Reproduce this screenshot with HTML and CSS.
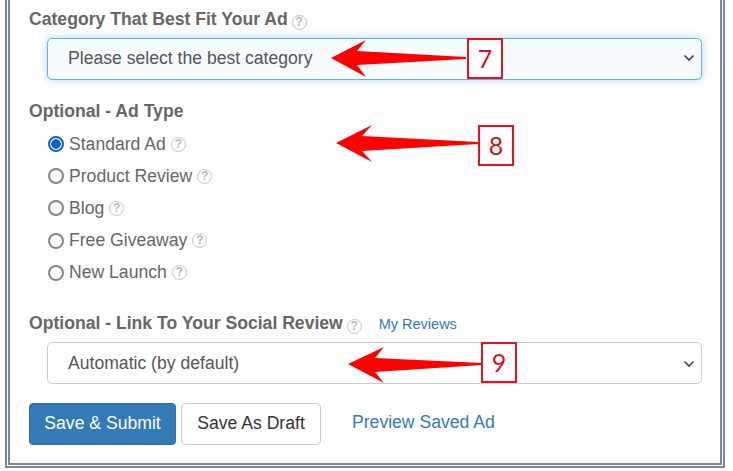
FILE: index.html
```html
<!DOCTYPE html>
<html lang="en">
<head>
  <meta charset="UTF-8" />
  <title>Submit Ad</title>
  <link rel="stylesheet" href="styles.css">
</head>
<body>

<div class="frame">
  <form class="ad-form">
    <div class="group group-category">
      <div class="group-label">Category That Best Fit Your Ad <span class="help">?</span></div>
      <div class="select select-focus">
        <span>Please select the best category</span>
        <svg class="chevron" viewBox="0 0 12 8"><path d="M1.5 1.5 6 6l4.5-4.5" /></svg>
      </div>
    </div>

    <div class="group group-type">
      <div class="group-label">Optional - Ad Type</div>
      <div class="radios">
        <label class="radio"><span class="dot dot-on"></span>Standard Ad <span class="help">?</span></label>
        <label class="radio"><span class="dot"></span>Product Review <span class="help">?</span></label>
        <label class="radio"><span class="dot"></span>Blog <span class="help">?</span></label>
        <label class="radio"><span class="dot"></span>Free Giveaway <span class="help">?</span></label>
        <label class="radio"><span class="dot"></span>New Launch <span class="help">?</span></label>
      </div>
    </div>

    <div class="group group-review">
      <div class="group-label">Optional - Link To Your Social Review <span class="help">?</span><a class="my-reviews" href="#">My Reviews</a></div>
      <div class="select">
        <span>Automatic (by default)</span>
        <svg class="chevron" viewBox="0 0 12 8"><path d="M1.5 1.5 6 6l4.5-4.5" /></svg>
      </div>
    </div>

    <div class="actions">
      <button type="button" class="btn btn-primary">Save &amp; Submit</button>
      <button type="button" class="btn btn-default">Save As Draft</button>
      <a class="preview-link" href="#">Preview Saved Ad</a>
    </div>
  </form>
</div>

<!-- red callouts drawn over the form -->
<svg class="arrow arrow-7" viewBox="0 0 136 40"><path d="M0 19 35 1 26 12 135 18V20L26 26 35 38Z" /></svg>
<div class="callout callout-7">7</div>
<svg class="arrow arrow-8" viewBox="0 0 143 40"><path d="M0 18 36 0 26 11 142 17V19L26 26 36 37Z" /></svg>
<div class="callout callout-8">8</div>
<svg class="arrow arrow-9" viewBox="0 0 135 40"><path d="M0 17 36 0 27 11 134 16V18L27 25 36 36Z" /></svg>
<div class="callout callout-9">9</div>

</body>
</html>
```

FILE: styles.css
```css
body {
  font-family: 'Liberation Sans', Arial, sans-serif;
  margin: 0;
  height: 471px;
  overflow: hidden;
  background: #fff;
  color: #555;
}
.frame {
  margin: 0 8px 0 5px;
  height: 468px;
  box-sizing: border-box;
  border: 5px double #7a86a5;
  border-top: none;
  padding: 0 18px 0 19px;
}
.group-label {
  font-size: 17.6px;
  font-weight: bold;
  color: #666;
  line-height: 22px;
}
.group-category {
  padding-top: 8px;
}
.group-type {
  padding-top: 20px;
}
.group-review {
  padding-top: 23px;
}
.group-review .select {
  margin-top: 7px;
  padding-top: 2px;
}
.help {
  display: inline-block;
  box-sizing: border-box;
  width: 15px;
  height: 15px;
  margin-left: -1px;
  border: 1.5px solid #c4c4c4;
  border-radius: 50%;
  color: #b8b8b8;
  font-size: 12px;
  font-weight: bold;
  line-height: 12px;
  text-align: center;
  vertical-align: -1px;
}
.select {
  display: flex;
  justify-content: space-between;
  align-items: center;
  box-sizing: border-box;
  height: 42px;
  margin: 8px 0 0 18px;
  padding: 0 6px 0 20px;
  border: 1px solid #ccc;
  border-radius: 5px;
  font-size: 17.6px;
  color: #555;
  background: #fff;
}
.select-focus {
  padding-bottom: 2px;
  border-color: #66afe9;
  background: #f6fbff;
  box-shadow: 0 0 8px rgba(102, 175, 233, 0.5);
}
.chevron {
  width: 12px;
  height: 8px;
  fill: none;
  stroke: #444;
  stroke-width: 1.6;
}
.radios {
  margin: 6px 0 0 19px;
}
.radio {
  display: flex;
  align-items: center;
  height: 32.2px;
  font-size: 17.6px;
  color: #666;
}
.radio .help {
  margin-left: 5px;
}
.dot {
  box-sizing: border-box;
  width: 16px;
  height: 16px;
  margin-right: 5px;
  border: 2px solid #85858c;
  border-radius: 50%;
  background: #fff;
}
.dot-on {
  border-color: #0b63ce;
  background: radial-gradient(circle, #0b63ce 0 4.5px, #fff 5px);
}
.my-reviews {
  margin-left: 17px;
  font-size: 14.5px;
  font-weight: normal;
  color: #337ab7;
  text-decoration: none;
}
.actions {
  display: flex;
  align-items: center;
  margin-top: 19px;
}
.btn {
  box-sizing: border-box;
  height: 42px;
  padding: 0;
  border-radius: 4px;
  font-family: inherit;
  font-size: 17.6px;
}
.btn-primary {
  width: 147px;
  background: #337ab7;
  border: 1px solid #2e6da4;
  color: #fff;
}
.btn-default {
  width: 140px;
  margin-left: 5px;
  background: #fff;
  border: 1px solid #ccc;
  color: #333;
}
.preview-link {
  margin: -3px 0 0 31px;
  font-size: 17.6px;
  color: #337ab7;
  text-decoration: none;
}
.arrow {
  position: absolute;
  fill: #f00;
}
.arrow-7 {
  left: 331px;
  top: 39px;
  width: 136px;
  height: 40px;
}
.arrow-8 {
  left: 336px;
  top: 125px;
  width: 143px;
  height: 40px;
}
.arrow-9 {
  left: 348px;
  top: 347px;
  width: 135px;
  height: 40px;
}
.callout {
  position: absolute;
  box-sizing: border-box;
  width: 36px;
  height: 41px;
  border: 2px solid #e8101a;
  background: #fff;
  color: #d4101a;
  font-family: Lato, sans-serif;
  font-size: 25px;
  line-height: 37px;
  text-align: center;
}
.callout-7 {
  left: 467px;
  top: 38px;
}
.callout-8 {
  left: 478px;
  top: 125px;
}
.callout-9 {
  left: 481px;
  top: 342px;
}
```
